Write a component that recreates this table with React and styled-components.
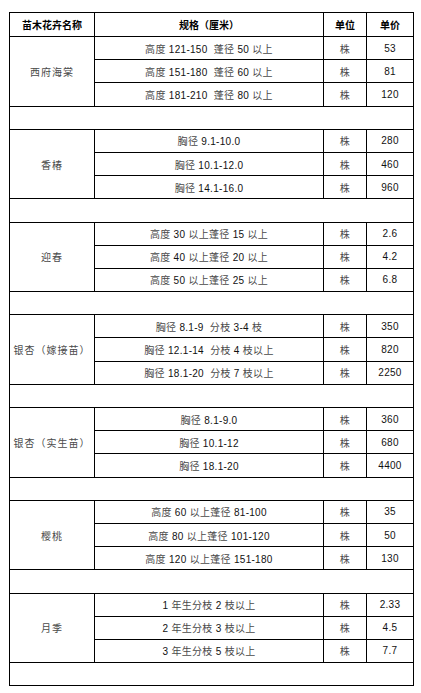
import React from "react";
import styled, { createGlobalStyle } from "styled-components";

const GlobalStyle = createGlobalStyle`
	html, body {
		margin: 0;
		padding: 0;
		background: #fff;
	}
	body {
		font-family: "Liberation Sans", "Noto Sans CJK SC", sans-serif;
	}
`;

const groups = [
	{
		name: "西府海棠",
		rows: [
			["高度 121-150  蓬径 50 以上", "53"],
			["高度 151-180  蓬径 60 以上", "81"],
			["高度 181-210  蓬径 80 以上", "120"],
		],
	},
	{
		name: "香椿",
		rows: [
			["胸径 9.1-10.0", "280"],
			["胸径 10.1-12.0", "460"],
			["胸径 14.1-16.0", "960"],
		],
	},
	{
		name: "迎春",
		rows: [
			["高度 30 以上蓬径 15 以上", "2.6"],
			["高度 40 以上蓬径 20 以上", "4.2"],
			["高度 50 以上蓬径 25 以上", "6.8"],
		],
	},
	{
		name: "银杏（嫁接苗）",
		rows: [
			["胸径 8.1-9  分枝 3-4 枝", "350"],
			["胸径 12.1-14  分枝 4 枝以上", "820"],
			["胸径 18.1-20  分枝 7 枝以上", "2250"],
		],
	},
	{
		name: "银杏（实生苗）",
		rows: [
			["胸径 8.1-9.0", "360"],
			["胸径 10.1-12", "680"],
			["胸径 18.1-20", "4400"],
		],
	},
	{
		name: "樱桃",
		rows: [
			["高度 60 以上蓬径 81-100", "35"],
			["高度 80 以上蓬径 101-120", "50"],
			["高度 120 以上蓬径 151-180", "130"],
		],
	},
	{
		name: "月季",
		rows: [
			["1 年生分枝 2 枝以上", "2.33"],
			["2 年生分枝 3 枝以上", "4.5"],
			["3 年生分枝 5 枝以上", "7.7"],
		],
	},
];

const Page = styled.div`
	padding: 12px 0 0 9px;
`;

const Table = styled.table`
	border-collapse: collapse;
	table-layout: fixed;
	width: 404px;
	border: 1px solid #000;
`;

const HeadCell = styled.th`
	border: 1px solid #000;
	height: 23px;
	padding: 0;
	font-size: 10px;
	font-weight: 700;
	color: #000;
	text-align: center;
	vertical-align: middle;
`;

const Cell = styled.td`
	border: 1px solid #000;
	height: 22.2px;
	padding: 0;
	font-size: 10px;
	color: #111;
	text-align: center;
	vertical-align: middle;
	white-space: pre;
	letter-spacing: ${(p) => (p.$spaced ? "1px" : "0.3px")};
`;

const Blank = styled.td`
	border: 1px solid #000;
	height: 22.2px;
	padding: 0;
`;

const Han = styled.span`
	color: #4a4a4a;
`;

// split a string so the chinese runs get the lighter grey of the source
const Mixed = ({ text }) =>
	text.split(/([\u3000-\u9fff\uff00-\uffef]+)/).map((part, i) =>
		/[\u3000-\u9fff\uff00-\uffef]/.test(part) ? <Han key={i}>{part}</Han> : part,
	);

const App = () => {
	return (
		<Page>
			<GlobalStyle />
			<Table>
				<colgroup>
					<col style={{ width: 85 }} />
					<col style={{ width: 229 }} />
					<col style={{ width: 43 }} />
					<col style={{ width: 47 }} />
				</colgroup>
				<thead>
					<tr>
						<HeadCell>苗木花卉名称</HeadCell>
						<HeadCell>规格（厘米）</HeadCell>
						<HeadCell>单位</HeadCell>
						<HeadCell>单价</HeadCell>
					</tr>
				</thead>
				<tbody>
					{groups.map((g) => (
						<React.Fragment key={g.name}>
							{g.rows.map(([spec, price], i) => (
								<tr key={spec}>
									{i === 0 && (
										<Cell rowSpan={3} $spaced>
											<Mixed text={g.name} />
										</Cell>
									)}
									<Cell>
										<Mixed text={spec} />
									</Cell>
									<Cell>
										<Mixed text="株" />
									</Cell>
									<Cell>{price}</Cell>
								</tr>
							))}
							<tr>
								<Blank colSpan={4} />
							</tr>
						</React.Fragment>
					))}
				</tbody>
			</Table>
		</Page>
	);
};

export default App;
